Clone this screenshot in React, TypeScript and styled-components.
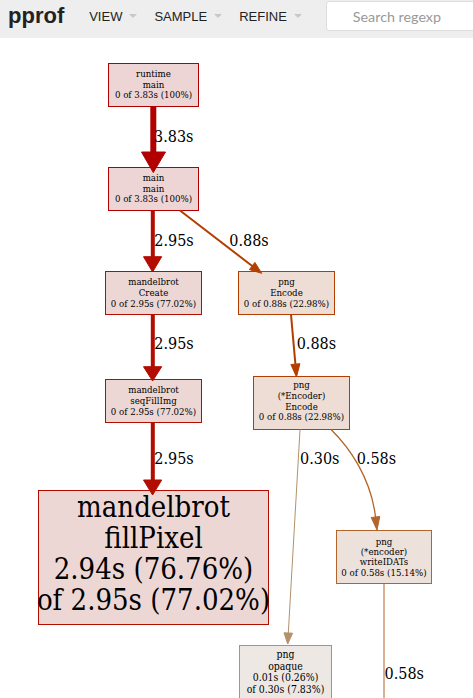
import React from "react";
import styled, { createGlobalStyle } from "styled-components";

type Tone = { fill: string; stroke: string };

const tones: Record<string, Tone> = {
  hot: { fill: "#edd5d5", stroke: "#b20000" },
  warm: { fill: "#edd7d5", stroke: "#b20d00" },
  orange: { fill: "#edddd5", stroke: "#b23f00" },
  rust: { fill: "#ede2db", stroke: "#b2652b" },
  tan: { fill: "#ede8e3", stroke: "#b2916c" },
};

const GlobalStyle = createGlobalStyle`
  html, body {
    margin: 0;
    padding: 0;
    background: #fff;
  }
  body {
    font-family: "Liberation Sans", Arial, sans-serif;
    overflow: hidden;
  }
`;

const Page = styled.div`
  width: 473px;
  height: 698px;
  display: flex;
  flex-direction: column;
  overflow: hidden;
`;

const Header = styled.header`
  flex: 0 0 38px;
  height: 38px;
  box-sizing: border-box;
  background: #eeeeee;
  display: flex;
  align-items: flex-start;
  padding-left: 8px;
  overflow: hidden;
`;

const Logo = styled.h1`
  margin: 5px 25px 0 0;
  font: bold 22px/22px "Liberation Sans", Arial, sans-serif;
  color: #222;
`;

const Menu = styled.nav`
  display: flex;
  margin-top: 10px;
`;

const MenuItem = styled.div`
  display: flex;
  align-items: center;
  gap: 7px;
  margin-right: 17px;
  font: 13px/13px "Liberation Sans", Arial, sans-serif;
  color: #222;
`;

const Caret = styled.span`
  width: 0;
  height: 0;
  border-left: 4px solid transparent;
  border-right: 4px solid transparent;
  border-top: 4px solid #c8c8c8;
  margin-bottom: 2px;
`;

const Search = styled.input`
  flex: 0 0 200px;
  height: 30px;
  box-sizing: border-box;
  margin: 1px 0 0 7px;
  padding: 0 0 0 26px;
  border: 1px solid #dddddd;
  border-radius: 3px;
  background: #fff;
  font: 14.3px Lato, "Open Sans", sans-serif;
  color: #333;
  outline: none;

  &::placeholder {
    color: #999;
  }
`;

const Graph = styled.svg`
  display: block;
  flex: 0 0 660px;
`;

const serif = `"DejaVu Serif Condensed", "DejaVu Serif", serif`;

const NodeBox = styled.rect<{ $tone: Tone }>`
  fill: ${({ $tone }) => $tone.fill};
  stroke: ${({ $tone }) => $tone.stroke};
  stroke-width: 1;
`;

const NodeText = styled.text<{ $size: number }>`
  font-family: ${serif};
  font-stretch: condensed;
  font-size: ${({ $size }) => $size}px;
  fill: #000;
  text-anchor: middle;
`;

const EdgeLine = styled.path<{ $color: string; $width: number }>`
  fill: none;
  stroke: ${({ $color }) => $color};
  stroke-width: ${({ $width }) => $width};
`;

const ArrowHead = styled.polygon<{ $color: string }>`
  fill: ${({ $color }) => $color};
  stroke: ${({ $color }) => $color};
  stroke-width: 1;
`;

const EdgeLabel = styled.text`
  font-family: ${serif};
  font-stretch: condensed;
  font-size: 16px;
  fill: #000;
`;

type NodeData = {
  x: number;
  y: number;
  w: number;
  h: number;
  lines: string[];
  size: number;
  first: number;
  lh: number;
  tone: Tone;
};

type EdgeData = {
  d: string;
  head: string;
  width: number;
  color: string;
  label: string;
  lx: number;
  ly: number;
};

const nodes: NodeData[] = [
  { x: 108.5, y: 63.5, w: 90, h: 43, lines: ["runtime", "main", "0 of 3.83s (100%)"], size: 9.6, first: 77, lh: 10.7, tone: tones.hot },
  { x: 108.5, y: 167.5, w: 90, h: 43, lines: ["main", "main", "0 of 3.83s (100%)"], size: 9.6, first: 181, lh: 10.7, tone: tones.hot },
  { x: 105.5, y: 271.5, w: 96, h: 43, lines: ["mandelbrot", "Create", "0 of 2.95s (77.02%)"], size: 9.6, first: 285, lh: 10.8, tone: tones.warm },
  { x: 105.5, y: 379.5, w: 96, h: 43, lines: ["mandelbrot", "seqFillImg", "0 of 2.95s (77.02%)"], size: 9.6, first: 393.3, lh: 10.8, tone: tones.warm },
  { x: 238.5, y: 271.5, w: 96, h: 43, lines: ["png", "Encode", "0 of 0.88s (22.98%)"], size: 9.6, first: 285, lh: 10.8, tone: tones.orange },
  { x: 253.5, y: 376.5, w: 96, h: 53, lines: ["png", "(*Encoder)", "Encode", "0 of 0.88s (22.98%)"], size: 9.6, first: 388.3, lh: 10.6, tone: tones.orange },
  { x: 38.5, y: 490.5, w: 230, h: 134, lines: ["mandelbrot", "fillPixel", "2.94s (76.76%)", "of 2.95s (77.02%)"], size: 29, first: 516.7, lh: 31, tone: tones.warm },
  { x: 336.5, y: 530.5, w: 95, h: 53, lines: ["png", "(*encoder)", "writeIDATs", "0 of 0.58s (15.14%)"], size: 9.6, first: 545, lh: 10.2, tone: tones.rust },
  { x: 239.5, y: 645.5, w: 92, h: 56, lines: ["png", "opaque", "0.01s (0.26%)", "of 0.30s (7.83%)"], size: 10.4, first: 658, lh: 11.5, tone: tones.tan },
];

const edges: EdgeData[] = [
  { d: "M153.3,106.5 V152", head: "141.5,152 165.5,152 153.3,172.5", width: 6, color: "#b20000", label: "3.83s", lx: 154, ly: 141.5 },
  { d: "M152.8,210.5 V257", head: "143.5,256.7 161.7,256.7 152.6,272", width: 4, color: "#b20d00", label: "2.95s", lx: 154.3, ly: 245.7 },
  { d: "M152.8,314.5 V367", head: "143.5,366.7 161.7,366.7 152.6,381", width: 4, color: "#b20d00", label: "2.95s", lx: 154.3, ly: 349.3 },
  { d: "M152.8,422.5 V480", head: "143.5,480 161.7,480 152.6,495", width: 4, color: "#b20d00", label: "2.95s", lx: 154.3, ly: 463.5 },
  { d: "M180,210.5 L252.2,266", head: "249.4,269.6 254.9,262.4 261.7,273.3", width: 2, color: "#b23f00", label: "0.88s", lx: 229.3, ly: 245.7 },
  { d: "M291,314.5 L295.4,364.1", head: "290.9,364.5 299.9,363.7 296.5,377", width: 2, color: "#b23f00", label: "0.88s", lx: 296.7, ly: 349.3 },
  { d: "M300,429.5 L288.3,633", head: "284,632.8 292.6,633.2 287.7,644", width: 1, color: "#b2916c", label: "0.30s", lx: 300, ly: 464 },
  { d: "M331,429.5 C349,447 371,478 375.5,517", head: "371.2,517.5 379.8,516.5 377,530", width: 1.3, color: "#b2652b", label: "0.58s", lx: 356.7, ly: 464 },
  { d: "M384,583.5 V700", head: "", width: 1, color: "#b2652b", label: "0.58s", lx: 384.5, ly: 679.3 },
];

const Node = ({ node }: { node: NodeData }) => (
  <g>
    <NodeBox x={node.x} y={node.y} width={node.w} height={node.h} $tone={node.tone} />
    {node.lines.map((line, i) => (
      <NodeText key={i} x={node.x + node.w / 2} y={node.first + i * node.lh} $size={node.size}>
        {line}
      </NodeText>
    ))}
  </g>
);

const Edge = ({ edge }: { edge: EdgeData }) => (
  <g>
    <EdgeLine d={edge.d} $color={edge.color} $width={edge.width} />
    {edge.head && <ArrowHead points={edge.head} $color={edge.color} />}
    <EdgeLabel x={edge.lx} y={edge.ly}>
      {edge.label}
    </EdgeLabel>
  </g>
);

const App = () => {
  return (
    <Page>
      <GlobalStyle />
      <Header>
        <Logo>pprof</Logo>
        <Menu>
          {["VIEW", "SAMPLE", "REFINE"].map((item) => (
            <MenuItem key={item}>
              {item}
              <Caret />
            </MenuItem>
          ))}
        </Menu>
        <Search type="text" placeholder="Search regexp" />
      </Header>
      <Graph width={473} height={660} viewBox="0 38 473 660">
        {nodes.map((n, i) => (
          <Node key={i} node={n} />
        ))}
        {edges.map((e, i) => (
          <Edge key={i} edge={e} />
        ))}
      </Graph>
    </Page>
  );
};

export default App;
